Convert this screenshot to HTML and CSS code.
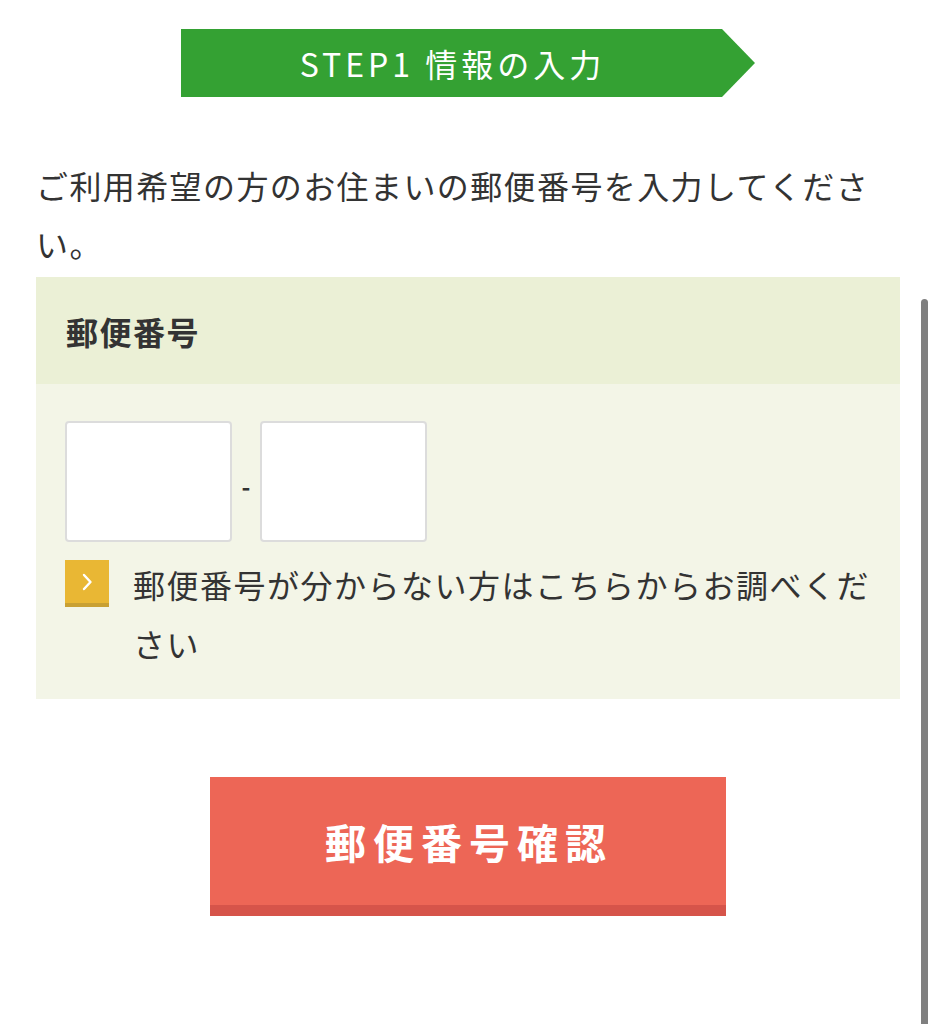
FILE: index.html
```html
<!DOCTYPE html>
<html lang="ja">
<head>
<meta charset="utf-8">
<title>STEP1 情報の入力</title>
<link rel="stylesheet" href="styles.css">
</head>
<body>
<div class="page">
  <div class="step"><span class="step-label">STEP1 情報の入力</span></div>
  <p class="intro">ご利用希望の方のお住まいの郵便番号を入力してください。</p>
  <div class="panel">
    <div class="panel-head">郵便番号</div>
    <div class="panel-body">
      <div class="zip-row">
        <input class="zip-input" type="text">
        <span class="zip-dash">-</span>
        <input class="zip-input" type="text">
      </div>
      <div class="link-row">
        <span class="link-icon"><svg width="14" height="20" viewBox="0 0 14 20"><path d="M4 3 L10.5 10 L4 17" fill="none" stroke="#fff" stroke-width="2.4" stroke-linecap="round" stroke-linejoin="round"/></svg></span>
        <span class="link-text">郵便番号が分からない方はこちらからお調べください</span>
      </div>
    </div>
  </div>
  <div class="btn-wrap">
    <button class="btn" type="button">郵便番号確認</button>
  </div>
</div>
<div class="scrollbar"></div>
</body>
</html>
```
FILE: styles.css
```css
html, body {
  margin: 0;
  padding: 0;
  background: #fff;
}
body {
  font-family: "Noto Sans CJK JP", "Noto Sans", sans-serif;
  color: #333;
  width: 936px;
  height: 1024px;
  overflow: hidden;
  position: relative;
}
.page {
  padding: 29px 36px 0;
}
.step {
  display: flex;
  justify-content: center;
}
.step-label {
  display: flex;
  align-items: center;
  justify-content: center;
  width: 574px;
  height: 68px;
  padding-right: 33px;
  padding-left: 2px;
  box-sizing: border-box;
  background: #34a133;
  color: #fff;
  font-size: 32px;
  letter-spacing: 4px;
  clip-path: polygon(0 0, 541px 0, 574px 50%, 541px 100%, 0 100%);
}
.intro {
  margin: 59px 0 0;
  font-size: 32px;
  line-height: 58px;
  letter-spacing: 1.4px;
  color: #333;
}
.panel {
  margin-top: 5px;
  width: 864px;
}
.panel-head {
  background: #ebf0d6;
  height: 107px;
  display: flex;
  align-items: center;
  padding-left: 30px;
  font-size: 32px;
  font-weight: 700;
  letter-spacing: 1.5px;
  color: #333;
}
.panel-body {
  background: #f3f5e7;
  padding: 37px 29px 26px;
}
.zip-row {
  display: flex;
  align-items: center;
}
.zip-input {
  width: 167px;
  height: 121px;
  box-sizing: border-box;
  border: 2px solid #dcdcdc;
  border-radius: 4px;
  background: #fff;
  margin: 0;
  padding: 0;
  outline: none;
}
.zip-dash {
  width: 28px;
  text-align: center;
  font-size: 24px;
  font-weight: 700;
  color: #333;
  padding-top: 8px;
}
.link-row {
  display: flex;
  align-items: flex-start;
  margin-top: 18px;
}
.link-icon {
  flex: none;
  width: 44px;
  height: 43px;
  background: #e9b734;
  border-bottom: 4px solid #c8a033;
  display: flex;
  align-items: center;
  justify-content: center;
}
.link-text {
  margin-left: 24px;
  margin-top: -5px;
  font-size: 32px;
  line-height: 59px;
  letter-spacing: 1.5px;
  color: #333;
}
.btn-wrap {
  display: flex;
  justify-content: center;
  margin-top: 78px;
}
.btn {
  width: 516px;
  height: 139px;
  box-sizing: border-box;
  border: none;
  border-bottom: 11px solid #d6544a;
  background: #ed6656;
  color: #fff;
  font-family: "Noto Sans CJK JP", "Noto Sans", sans-serif;
  font-size: 41px;
  font-weight: 700;
  letter-spacing: 7px;
  padding: 0 0 0 2px;
  margin: 0;
}
.scrollbar {
  position: absolute;
  left: 921px;
  top: 299px;
  width: 7px;
  height: 740px;
  border-radius: 4px;
  background: #7f7f7f;
}
```
